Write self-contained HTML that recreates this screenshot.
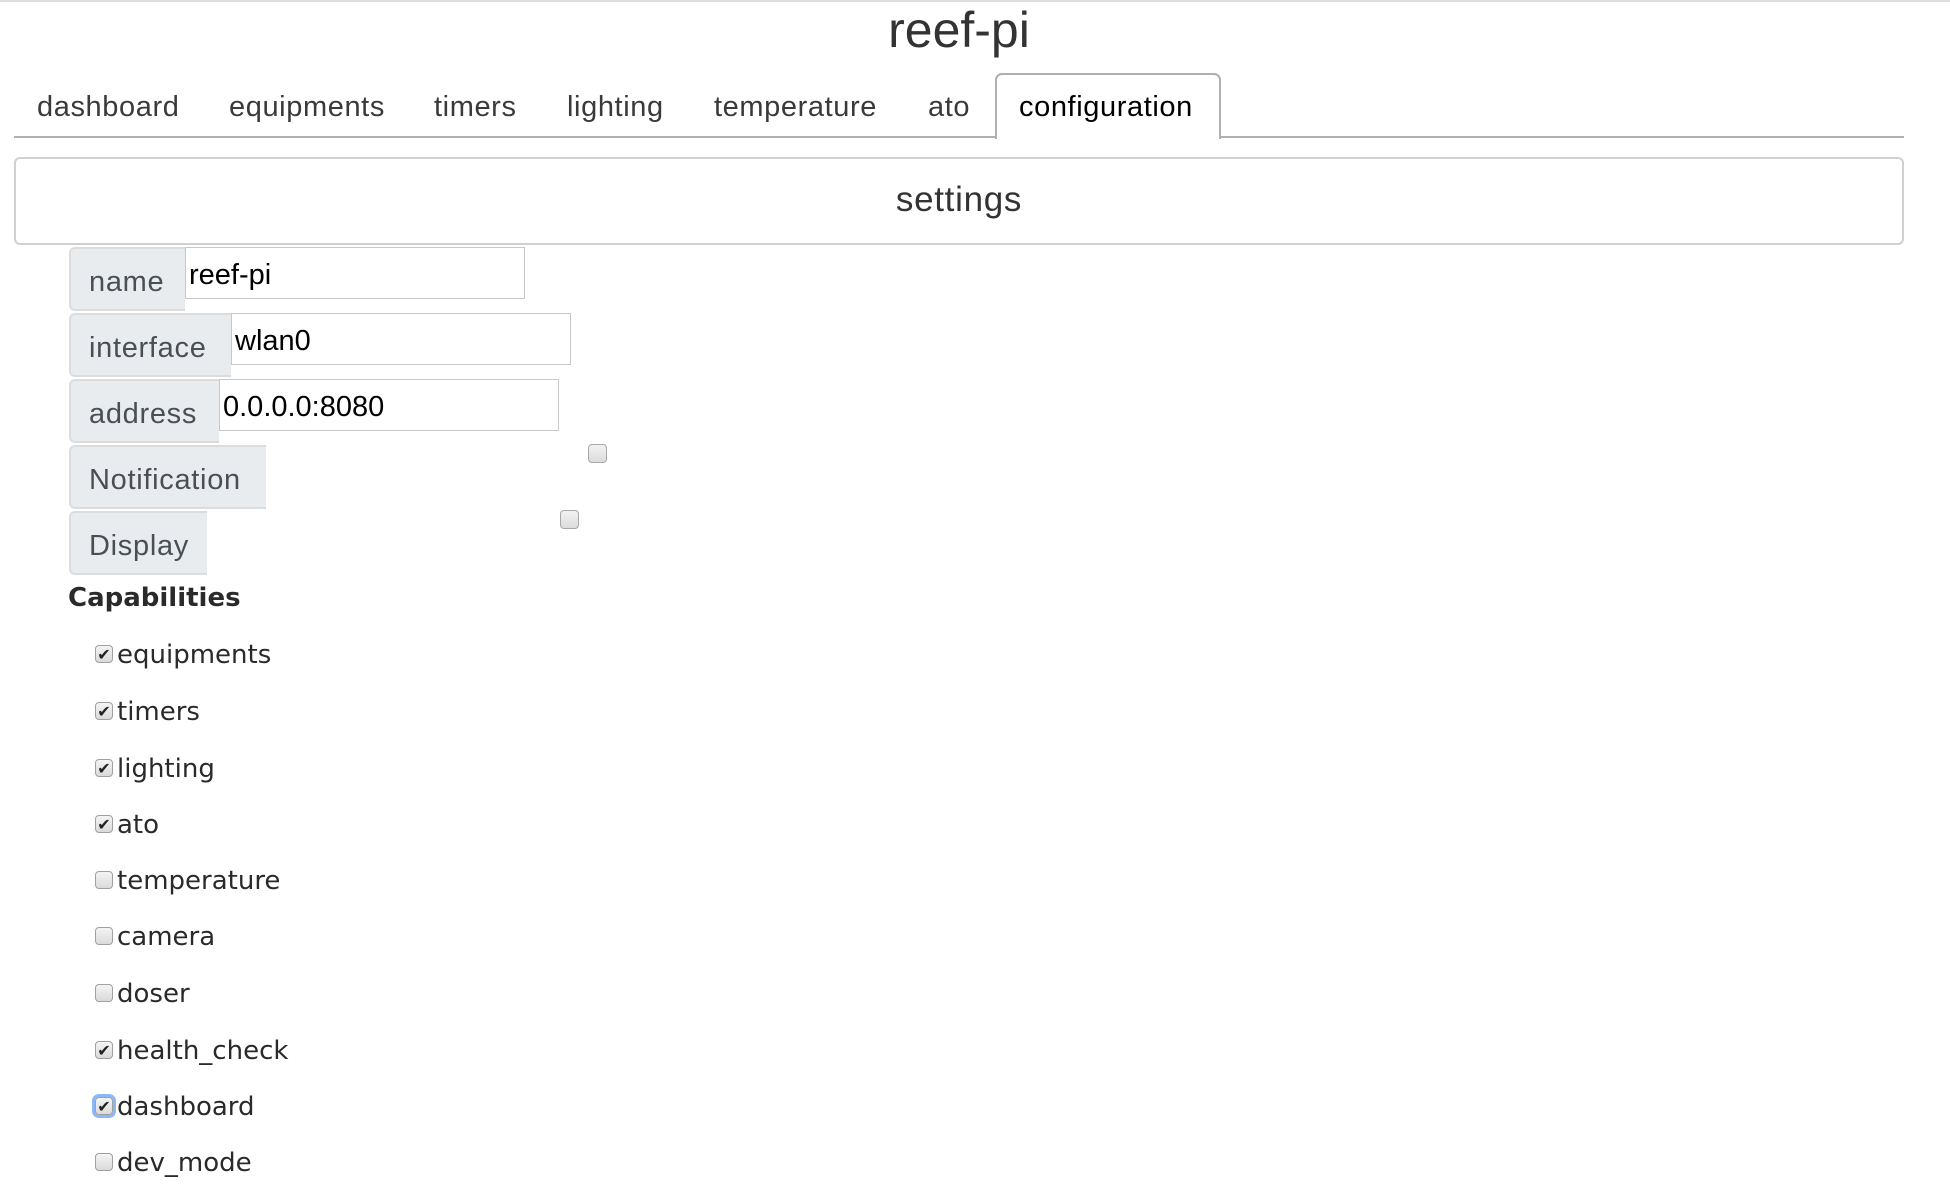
<!DOCTYPE html>
<html><head><meta charset="utf-8"><style>
*{margin:0;padding:0;box-sizing:border-box}
body{width:1950px;height:1200px;background:#fff;position:relative;overflow:hidden;font-family:"Liberation Sans",sans-serif;color:#333}
.a{position:absolute;white-space:nowrap}
.tab{position:absolute;top:88px;font-size:29px;letter-spacing:.6px;color:#3a3a3a;line-height:38px}
.lbl{position:absolute;left:69px;height:64px;background:#e9ecef;border:2px solid #dcdcdc;border-right:none;border-radius:6px 0 0 6px;font-size:29px;letter-spacing:.7px;color:#4a4f55;padding:15px 0 0 18px;line-height:36px}
.inp{position:absolute;height:52px;border:1px solid #c8c8c8;font-size:29px;color:#000;padding:9px 0 0 3px;line-height:36px;background:#fff}
.cb{position:absolute;width:19px;height:19px;border:1px solid #a8a8a8;border-radius:4px;background:linear-gradient(#f2f2f2,#dcdcdc)}
.cap{position:absolute;left:95px;font-family:"DejaVu Sans",sans-serif;font-size:26px;color:#2a2a2a}
.cap .c{position:absolute;left:0;top:7px;width:18px;height:18px;border:1px solid #a0a0a0;border-radius:4px;background:linear-gradient(#f4f4f4,#dadada);font-size:16px;line-height:17px;text-align:center;color:#222}
.cap span.t{position:absolute;left:22px;top:2px}
</style></head><body>
<div class="a" style="left:0;top:0;width:1950px;height:2px;background:#ddd"></div>
<div class="a" style="left:0;width:1918px;top:0;text-align:center;font-size:50px;color:#333;line-height:60px">reef-pi</div>

<div class="tab" style="left:37px">dashboard</div>
<div class="tab" style="left:229px">equipments</div>
<div class="tab" style="left:434px">timers</div>
<div class="tab" style="left:567px">lighting</div>
<div class="tab" style="left:714px">temperature</div>
<div class="tab" style="left:928px">ato</div>
<div class="a" style="left:14px;top:136px;width:1890px;height:2px;background:#b0b0b0"></div>
<div class="a" style="left:995px;top:73px;width:226px;height:66px;background:#fff;border:2px solid #b0b0b0;border-bottom:none;border-radius:7px 7px 0 0"></div>
<div class="tab" style="left:1019px;color:#000">configuration</div>

<div class="a" style="left:14px;top:157px;width:1890px;height:88px;border:2px solid #d0d0d0;border-radius:6px"></div>
<div class="a" style="left:14px;width:1890px;top:177px;text-align:center;font-size:35px;color:#333;line-height:46px;letter-spacing:.7px">settings</div>

<div class="lbl" style="top:247px;width:116px">name</div>
<div class="inp" style="top:247px;left:185px;width:340px">reef-pi</div>
<div class="lbl" style="top:313px;width:162px">interface</div>
<div class="inp" style="top:313px;left:231px;width:340px">wlan0</div>
<div class="lbl" style="top:379px;width:150px">address</div>
<div class="inp" style="top:379px;left:219px;width:340px">0.0.0.0:8080</div>
<div class="lbl" style="top:445px;width:197px">Notification</div>
<div class="cb" style="left:588px;top:444px"></div>
<div class="lbl" style="top:511px;width:138px">Display</div>
<div class="cb" style="left:560px;top:510px"></div>

<div class="a" style="left:68px;top:583px;font-family:'DejaVu Sans',sans-serif;font-weight:bold;font-size:26px;color:#2a2a2a">Capabilities</div>

<div class="cap" style="top:638px"><span class="c">✔</span><span class="t">equipments</span></div>
<div class="cap" style="top:695px"><span class="c">✔</span><span class="t">timers</span></div>
<div class="cap" style="top:752px"><span class="c">✔</span><span class="t">lighting</span></div>
<div class="cap" style="top:808px"><span class="c">✔</span><span class="t">ato</span></div>
<div class="cap" style="top:864px"><span class="c"></span><span class="t">temperature</span></div>
<div class="cap" style="top:920px"><span class="c"></span><span class="t">camera</span></div>
<div class="cap" style="top:977px"><span class="c"></span><span class="t">doser</span></div>
<div class="cap" style="top:1034px"><span class="c">✔</span><span class="t">health_check</span></div>
<div class="cap" style="top:1090px"><span class="c" style="box-shadow:0 0 0 3px #8ab8f5">✔</span><span class="t">dashboard</span></div>
<div class="cap" style="top:1146px"><span class="c"></span><span class="t">dev_mode</span></div>
</body></html>
